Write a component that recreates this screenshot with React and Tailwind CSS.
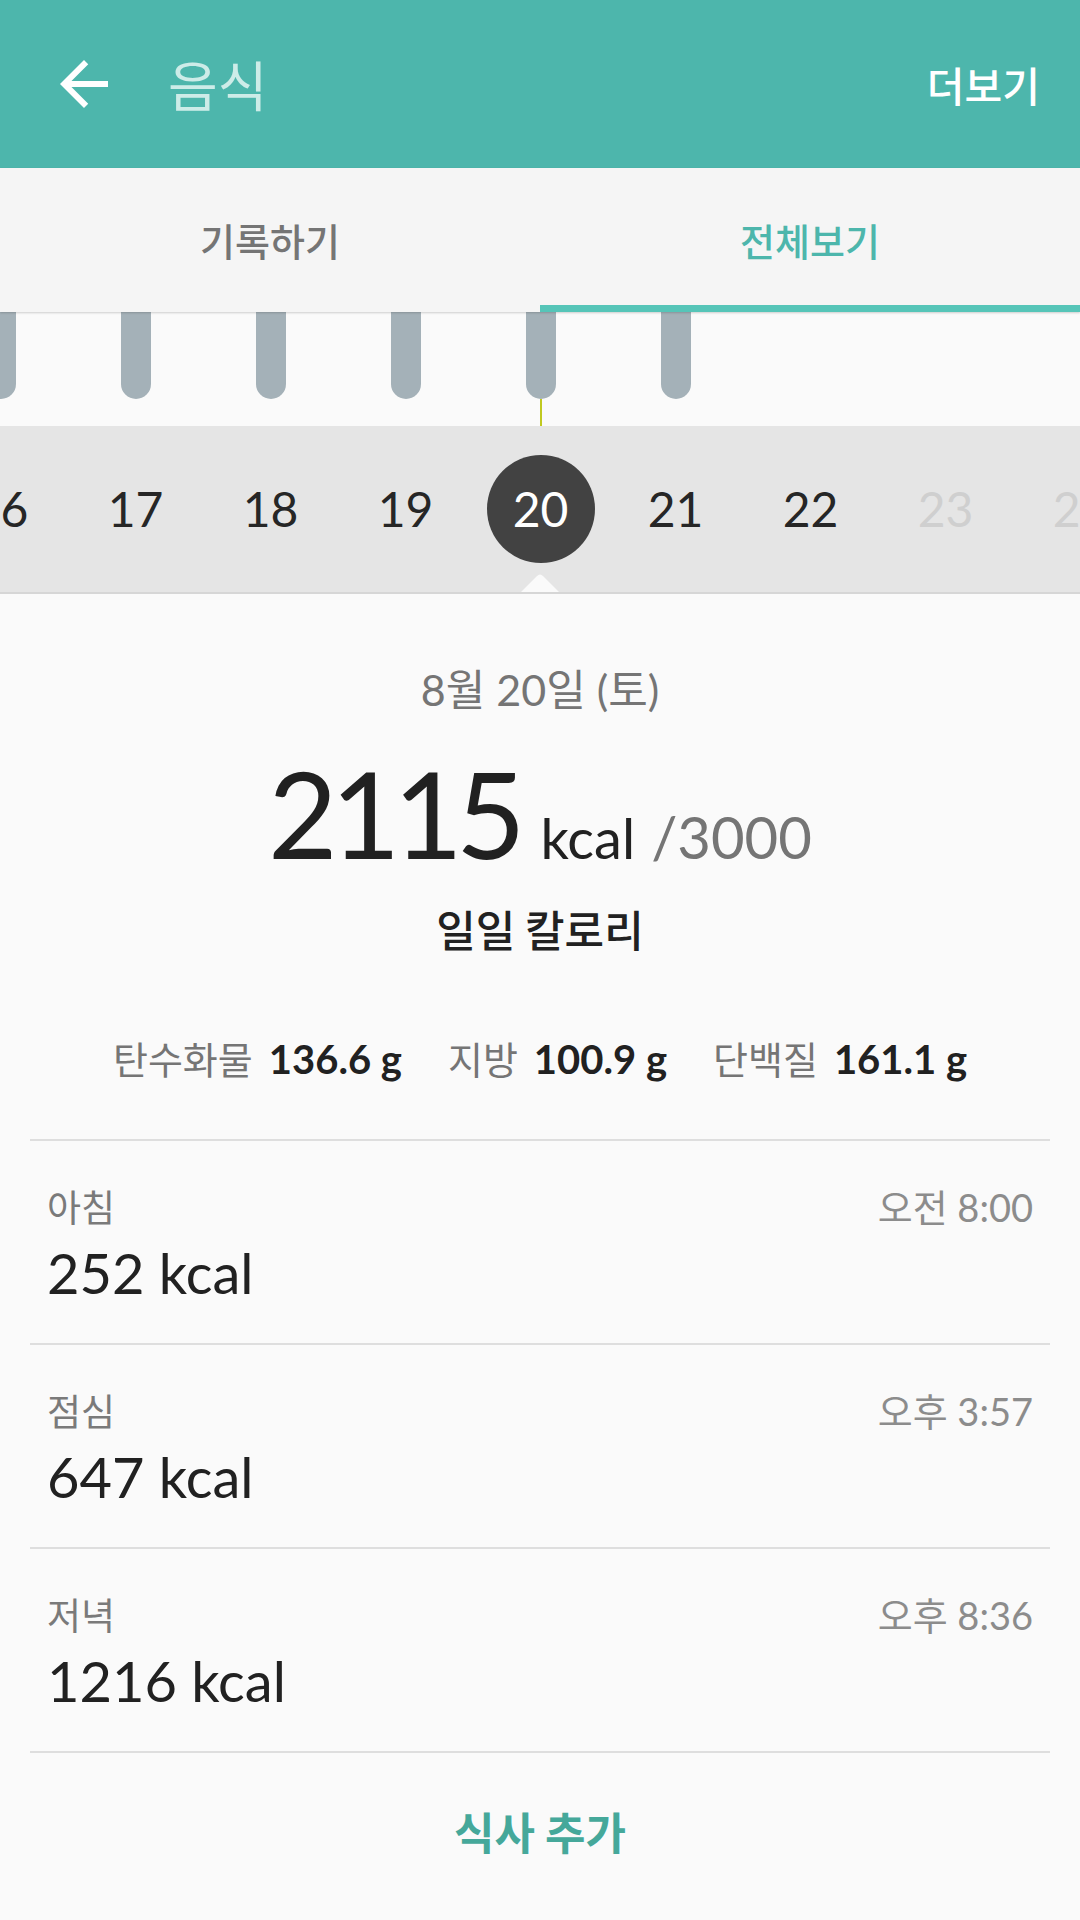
import React from 'react';

const days = [
  { d: 16, bar: true },
  { d: 17, bar: true },
  { d: 18, bar: true },
  { d: 19, bar: true },
  { d: 20, bar: true, active: true },
  { d: 21, bar: true },
  { d: 22 },
  { d: 23, future: true },
  { d: 24, future: true },
];

const meals = [
  { name: '아침', kcal: 252, time: '오전 8:00' },
  { name: '점심', kcal: 647, time: '오후 3:57' },
  { name: '저녁', kcal: 1216, time: '오후 8:36' },
];

const kr = { fontFamily: '"Noto Sans CJK KR", "Noto Sans", sans-serif' };
const num = { fontFamily: 'Lato, "Noto Sans CJK KR", sans-serif' };

const App = () => {
  return (
    <div className="w-[1080px] min-h-[1920px] bg-[#fafafa]" style={kr}>
      {/* App bar */}
      <div className="h-[168px] bg-[#4db6ac] flex items-center pl-[48px] pr-[40px]">
        <svg width="72" height="72" viewBox="0 0 24 24" className="shrink-0">
          <path d="M20 11H7.83l5.59-5.59L12 4l-8 8 8 8 1.41-1.41L7.83 13H20v-2z" fill="#ffffff" />
        </svg>
        <div className="ml-[48px] text-[54px] leading-none text-[#cdece8]">음식</div>
        <div className="ml-auto text-[41px] leading-none font-medium text-white">더보기</div>
      </div>

      {/* Tabs */}
      <div className="h-[144px] bg-[#f5f5f5] flex relative z-10 shadow-[0_1px_2px_rgba(0,0,0,0.18)]">
        <div className="flex-1 flex items-center justify-center text-[38px] leading-none font-medium text-[#757575]">
          기록하기
        </div>
        <div className="flex-1 flex items-center justify-center text-[38px] leading-none font-medium text-[#4db6ac] border-b-[7px] border-[#56c5b8] pt-[7px]">
          전체보기
        </div>
      </div>

      {/* Bars */}
      <div className="h-[114px] overflow-hidden">
        <div className="flex -ml-[67px] w-[1215px] h-full">
          {days.map((x) => (
            <div key={x.d} className="w-[135px] shrink-0 flex flex-col items-center">
              {x.bar && <div className="w-[30px] h-[87px] bg-[#a4b1b8] rounded-b-full" />}
              {x.active && <div className="w-[2px] flex-1 bg-[#c0c920]" />}
            </div>
          ))}
        </div>
      </div>

      {/* Date strip */}
      <div className="h-[168px] bg-[#e5e5e5] border-b-2 border-[#d6d6d6] relative overflow-hidden" style={num}>
        <div className="flex -ml-[67px] w-[1215px] h-full items-center">
          {days.map((x) => (
            <div key={x.d} className="w-[135px] shrink-0 flex items-center justify-center">
              {x.active ? (
                <div className="w-[108px] h-[108px] rounded-full bg-[#424242] flex items-center justify-center text-[48px] leading-none text-white">
                  {x.d}
                </div>
              ) : (
                <div className={`text-[48px] leading-none ${x.future ? 'text-[#cfcfcf]' : 'text-[#262626]'}`}>
                  {x.d}
                </div>
              )}
            </div>
          ))}
        </div>
        <svg width="42" height="20" viewBox="0 0 42 20" className="absolute left-[519px] bottom-[-2px]">
          <path d="M0 20 L18 2 Q21 -1 24 2 L42 20 Z" fill="#fafafa" />
        </svg>
      </div>

      {/* Summary */}
      <div className="flex flex-col items-center">
        <div className="mt-[72px] text-[43px] leading-none text-[#757575]" style={num}>
          8<span style={kr}>월</span> 20<span style={kr}>일</span> (<span style={kr}>토</span>)
        </div>
        <div className="mt-[42px] flex items-baseline text-[#212121]" style={num}>
          <span className="text-[120px] leading-none tracking-[-7px]">2115</span>
          <span className="ml-[22px] text-[56px] leading-none">kcal</span>
          <span className="ml-[16px] text-[58px] leading-none text-[#757575]">/3000</span>
        </div>
        <div className="mt-[34px] text-[43px] leading-none font-medium text-[#212121]">일일 칼로리</div>
        <div className="mt-[89px] flex items-baseline leading-none">
          <span className="text-[38px] text-[#757575]">탄수화물</span>
          <span className="ml-[16px] text-[40px] font-bold text-[#212121]" style={num}>136.6 g</span>
          <span className="ml-[46px] text-[38px] text-[#757575]">지방</span>
          <span className="ml-[16px] text-[40px] font-bold text-[#212121]" style={num}>100.9 g</span>
          <span className="ml-[46px] text-[38px] text-[#757575]">단백질</span>
          <span className="ml-[16px] text-[40px] font-bold text-[#212121]" style={num}>161.1 g</span>
        </div>
      </div>

      {/* Meals */}
      <div className="mx-[30px] mt-[60px]">
        {meals.map((m) => (
          <div key={m.name} className="h-[204px] border-t-2 border-[#dedede] px-[17px] pt-[46px]">
            <div className="flex justify-between items-baseline leading-none">
              <span className="text-[37px] text-[#7a7a7a]">{m.name}</span>
              <span className="text-[38px] text-[#8c8c8c]" style={num}>
                <span style={kr}>{m.time.slice(0, 2)}</span>
                {m.time.slice(2)}
              </span>
            </div>
            <div className="mt-[19px] text-[56px] leading-none text-[#212121]" style={num}>
              {m.kcal} kcal
            </div>
          </div>
        ))}
        <div className="border-t-2 border-[#dedede] pt-[56px] flex justify-center">
          <span className="text-[44px] leading-none font-bold text-[#45a89a]">식사 추가</span>
        </div>
      </div>
    </div>
  );
};

export default App;
